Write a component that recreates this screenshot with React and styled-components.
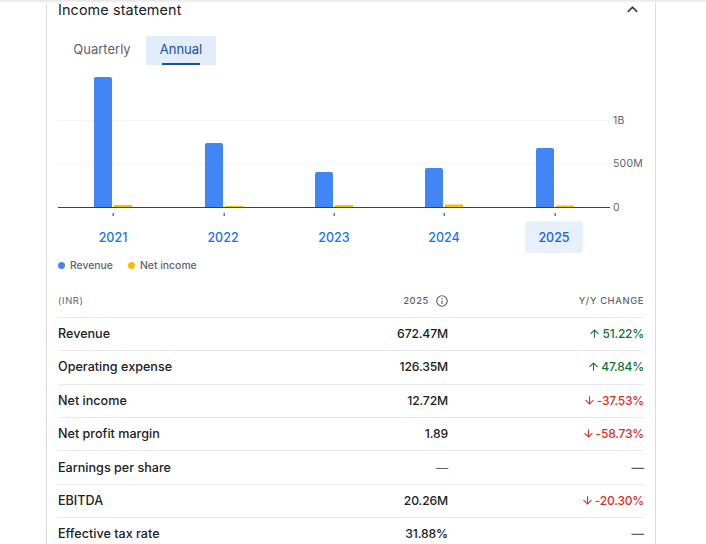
import React from 'react'
import styled, { createGlobalStyle } from 'styled-components'

const GlobalStyle = createGlobalStyle`
  html, body {
    margin: 0;
    padding: 0;
    height: 544px;
    overflow: hidden;
    background: #fff;
    font-family: Inter, Roboto, "Liberation Sans", sans-serif;
  }
`

const Page = styled.div`
  position: relative;
  height: 544px;
  overflow: hidden;
  padding-left: 46px;
  box-sizing: border-box;
`

const TopShade = styled.div`
  position: absolute;
  top: 0;
  left: 0;
  right: 0;
  height: 3px;
  background: linear-gradient(#e4e4e4, #ffffff);
`

const Card = styled.section`
  width: 610px;
  box-sizing: border-box;
  border-left: 1px solid #dadce0;
  border-right: 1px solid #dadce0;
  padding: 0 11px;
  height: 544px;
`

const Header = styled.header`
  display: flex;
  align-items: center;
  justify-content: space-between;
  height: 19px;
  padding-bottom: 1px;
  color: #202124;
  font-size: 14.4px;
  letter-spacing: 0.1px;
`

const Chevron = styled.svg`
  width: 21px;
  height: 21px;
  fill: #3c4043;
  margin-right: 1px;
`

const Tabs = styled.div`
  display: flex;
  margin-top: 16px;
  height: 29px;
`

const Tab = styled.button`
  position: relative;
  width: ${p => p.$width}px;
  border: 0;
  padding: 0 0 3px;
  font: 400 13px Inter, sans-serif;
  color: ${p => (p.$active ? '#174ea6' : '#5f6368')};
  background: ${p => (p.$active ? '#e2ecfa' : 'transparent')};

  ${p => p.$active && `
    &::after {
      content: '';
      position: absolute;
      left: 16px;
      right: 16px;
      bottom: 0;
      height: 2px;
      background: #174ea6;
    }
  `}
`

const Chart = styled.svg`
  display: block;
  width: 608px;
  height: 156px;
  margin-left: -11px;
`

const AxisText = styled.text`
  font: 400 10.5px Inter, sans-serif;
  letter-spacing: 0.2px;
  fill: #5f6368;
`

const Years = styled.div`
  display: flex;
  height: 32px;
`

const Year = styled.div`
  width: 58px;
  margin-left: ${p => p.$gap}px;
  display: flex;
  align-items: center;
  justify-content: center;
  border-radius: 4px;
  font-size: 12.5px;
  font-weight: 450;
  color: ${p => (p.$active ? '#1967d2' : '#1a73e8')};
  background: ${p => (p.$active ? '#e8f0fd' : 'transparent')};
`

const Legend = styled.div`
  display: flex;
  gap: 15px;
  margin-top: 3px;
  height: 18px;
  align-items: center;
`

const LegendItem = styled.span`
  display: flex;
  align-items: center;
  gap: 5px;
  font-size: 10.4px;
  font-weight: 500;
  color: #5f6368;

  &::before {
    content: '';
    width: 7px;
    height: 7px;
    border-radius: 50%;
    background: ${p => p.$color};
  }
`

const Table = styled.div`
  margin-top: 8px;
`

const Row = styled.div`
  display: grid;
  grid-template-columns: 1fr 110px 196px;
  align-items: center;
  height: 33.4px;
  box-sizing: border-box;
  border-top: 1px solid #e8eaed;
  padding-bottom: 1px;
  font-size: 12.6px;
  font-weight: 450;
  color: #202124;
`

const HeadRow = styled(Row)`
  height: 34.8px;
  border-top: 0;
  padding: 3px 0 0;
  font-size: 9.4px;
  font-weight: 500;
  letter-spacing: 0.6px;
  color: #5f6368;
`

const Name = styled.div`
  color: #202124;
`

const Unit = styled.div`
  font-weight: 400;
`

const Value = styled.div`
  display: flex;
  align-items: center;
  justify-content: flex-end;
  gap: 6px;
  font-size: ${p => (p.$head ? '9.4px' : '12.2px')};
  letter-spacing: ${p => (p.$head ? '0.6px' : '-0.15px')};
`

const Change = styled.div`
  display: flex;
  align-items: center;
  justify-content: flex-end;
  gap: 1px;
  font-size: ${p => (p.$dir ? '12px' : 'inherit')};
  letter-spacing: ${p => (p.$dir ? '-0.2px' : 'inherit')};
  color: ${p => (p.$dir === 'up' ? '#137333' : p.$dir === 'down' ? '#d93025' : '#5f6368')};
`

const Dash = styled.span`
  color: #5f6368;
`

const Arrow = styled.svg`
  width: 13px;
  height: 13px;
  fill: currentColor;
`

const InfoIcon = styled.svg`
  width: 14px;
  height: 14px;
  margin-right: -1px;
  fill: #5f6368;
`

const bars = [
  { x: 94, top: 77, net: 205 },
  { x: 205, top: 143, net: 206 },
  { x: 315, top: 172, net: 205 },
  { x: 425, top: 168, net: 204.5 },
  { x: 536, top: 148, net: 205.5 },
]

const years = [
  { label: '2021', gap: 26 },
  { label: '2022', gap: 52 },
  { label: '2023', gap: 53 },
  { label: '2024', gap: 52 },
  { label: '2025', gap: 52, active: true },
]

const rows = [
  ['Revenue', '672.47M', '51.22%', 'up'],
  ['Operating expense', '126.35M', '47.84%', 'up'],
  ['Net income', '12.72M', '-37.53%', 'down'],
  ['Net profit margin', '1.89', '-58.73%', 'down'],
  ['Earnings per share', '—', '—'],
  ['EBITDA', '20.26M', '-20.30%', 'down'],
  ['Effective tax rate', '31.88%', '—'],
]

// chart coordinates are page coordinates, the viewBox starts where the svg sits
function RevenueChart() {
  return (
    <Chart viewBox="47 65 608 156">
      <line x1="58" x2="610" y1="120.5" y2="120.5" stroke="#f4f4f5" />
      <line x1="58" x2="610" y1="163.5" y2="163.5" stroke="#f4f4f5" />
      {bars.map(b => (
        <g key={b.x}>
          <path
            fill="#4285f4"
            d={`M${b.x} 207V${b.top + 2}a2 2 0 0 1 2-2h14a2 2 0 0 1 2 2V207z`}
          />
          <rect x={b.x + 20} y={b.net} width="18" height={207 - b.net} fill="#fbbc04" />
          <rect x={b.x + 18.5} y="213" width="1.5" height="3" fill="#70757a" />
        </g>
      ))}
      <line x1="58" x2="610" y1="207.5" y2="207.5" stroke="#3c4043" />
      <AxisText x="613" y="124">1B</AxisText>
      <AxisText x="613" y="167">500M</AxisText>
      <AxisText x="613" y="211">0</AxisText>
    </Chart>
  )
}

function App() {
  return (
    <Page>
      <GlobalStyle />
      <TopShade />
      <Card>
        <Header>
          Income statement
          <Chevron viewBox="0 0 24 24">
            <path d="M12 8l-6 6 1.41 1.41L12 10.83l4.59 4.58L18 14z" />
          </Chevron>
        </Header>
        <Tabs>
          <Tab $width={88}>Quarterly</Tab>
          <Tab $width={70} $active>Annual</Tab>
        </Tabs>
        <RevenueChart />
        <Years>
          {years.map(y => (
            <Year key={y.label} $gap={y.gap} $active={y.active}>{y.label}</Year>
          ))}
        </Years>
        <Legend>
          <LegendItem $color="#4285f4">Revenue</LegendItem>
          <LegendItem $color="#fbbc04">Net income</LegendItem>
        </Legend>
        <Table>
          <HeadRow>
            <Unit>(INR)</Unit>
            <Value $head>
              2025
              <InfoIcon viewBox="0 0 24 24">
                <path d="M11 7h2v2h-2zm0 4h2v6h-2zm1-9a10 10 0 1 0 0 20 10 10 0 0 0 0-20zm0 18a8 8 0 1 1 0-16 8 8 0 0 1 0 16z" />
              </InfoIcon>
            </Value>
            <Change>Y/Y CHANGE</Change>
          </HeadRow>
          {rows.map(([name, value, change, dir]) => (
            <Row key={name}>
              <Name>{name}</Name>
              <Value>{value === '—' ? <Dash>{value}</Dash> : value}</Value>
              <Change $dir={dir}>
                {dir === 'up' && (
                  <Arrow viewBox="0 0 24 24">
                    <path d="M4 12l1.41 1.41L11 7.83V20h2V7.83l5.58 5.59L20 12l-8-8-8 8z" />
                  </Arrow>
                )}
                {dir === 'down' && (
                  <Arrow viewBox="0 0 24 24">
                    <path d="M20 12l-1.41-1.41L13 16.17V4h-2v12.17l-5.58-5.59L4 12l8 8 8-8z" />
                  </Arrow>
                )}
                {change}
              </Change>
            </Row>
          ))}
        </Table>
      </Card>
    </Page>
  )
}

export default App
